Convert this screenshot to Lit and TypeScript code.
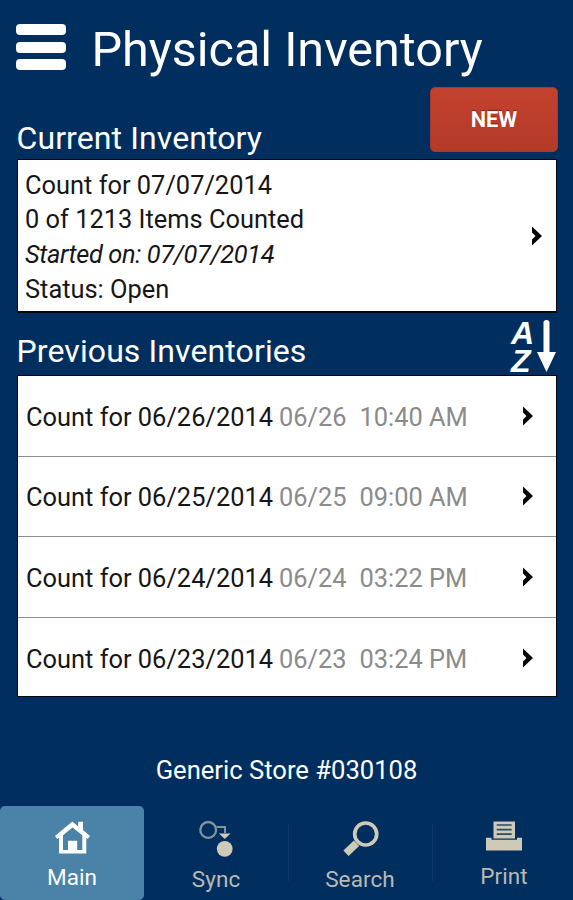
import { LitElement, html, css, svg } from "lit";
import { customElement, property } from "lit/decorators.js";
import { classMap } from "lit/directives/class-map.js";

interface Count {
  date: string;
  day: string;
  time: string;
}

const previous: Count[] = [
  { date: "06/26/2014", day: "06/26", time: "10:40 AM" },
  { date: "06/25/2014", day: "06/25", time: "09:00 AM" },
  { date: "06/24/2014", day: "06/24", time: "03:22 PM" },
  { date: "06/23/2014", day: "06/23", time: "03:24 PM" },
];

const glyphs = {
  main: svg`
    <path d="M1 17 18.300 2.500 24.200 7.500V2.800H29V11L36 17 33.800 20 32.300 18.700V34.500H5V18.700L3.300 20Z" fill="#fff"/>
    <path d="M9 16.300 18.500 8.500 28.300 16.300V31H23.200V21.800H14V31H9Z" fill="#4b82a8"/>`,
  sync: svg`
    <circle cx="10.200" cy="10.900" r="7.900" fill="none" stroke="#85939a" stroke-width="2.300"/>
    <path d="M18.500 8H27V14" fill="none" stroke="#85939a" stroke-width="2"/>
    <path d="M21 14.500H32.500L26.800 20Z" fill="#cfcab8"/>
    <circle cx="26.700" cy="29.800" r="7.900" fill="#cfcab8"/>`,
  search: svg`
    <circle cx="23.700" cy="15" r="11" fill="none" stroke="#cfcab8" stroke-width="3.700"/>
    <path d="M14.500 24.300 4 34.300" fill="none" stroke="#cfcab8" stroke-width="7.600"/>`,
  print: svg`
    <rect x="7.500" y="2.500" width="21.500" height="17" fill="#cfcab8"/>
    <path d="M10.700 6H25.700M10.700 10.600H25.700M10.700 15.200H25.700" stroke="#2c4a62" stroke-width="1.700"/>
    <path d="M0 18.700H5.500V20.700H31V18.700H36V31.500H0Z" fill="#cfcab8"/>`,
};

@customElement("tab-item")
export class TabItem extends LitElement {
  @property() icon: keyof typeof glyphs = "main";
  @property() label = "";
  @property({ type: Boolean }) active = false;

  static styles = css`
    :host { display: block; }
    .tab {
      box-sizing: border-box;
      height: 94px;
      padding-top: 13px;
      display: flex;
      flex-direction: column;
      align-items: center;
      color: #b9b9b6;
      font: 22.5px/26px Roboto, sans-serif;
    }
    .active { background: #4b82a8; color: #fff; border-radius: 5px; }
    svg { display: block; width: 37px; height: 38px; }
    .label { margin-top: 9px; letter-spacing: 0.1px; }
    .active .label { margin-top: 7px; }
    .print .label { margin-top: 6px; }
  `;

  render() {
    return html`<div class=${classMap({ tab: true, active: this.active, [this.icon]: true })}>
      <svg viewBox="0 0 37 38">${glyphs[this.icon]}</svg>
      <span class="label">${this.label}</span>
    </div>`;
  }
}

@customElement("app-root")
export class AppRoot extends LitElement {
  static styles = css`
    :host {
      display: block;
      height: 900px;
      overflow: hidden;
      background: #002f5f;
      color: #fff;
      font-family: Roboto, sans-serif;
    }
    .page { height: 900px; display: flex; flex-direction: column; }
    header { height: 87px; display: flex; align-items: flex-start; padding-left: 16px; box-sizing: border-box; }
    .burger { width: 50px; padding-top: 24px; display: grid; gap: 6.5px; }
    .bar { height: 11px; border-radius: 4px; background: #fff; }
    h1 { margin: 22px 0 0 25.500px; font-size: 48.5px; line-height: 56px; font-weight: 400; white-space: nowrap; }
    .heading { display: flex; justify-content: space-between; padding: 0 15px 0 16.5px; }
    .current { height: 72px; }
    .earlier { height: 62px; }
    h2 { margin: 0; font-size: 32px; line-height: 36px; font-weight: 400; white-space: nowrap; letter-spacing: 0.1px; }
    .current h2 { padding-top: 33px; }
    .earlier h2 { padding-top: 20px; }
    button {
      width: 128px; height: 65px; padding: 0; border: 1px solid #a93a2b; border-radius: 5px;
      background: linear-gradient(#c4412f, #b33a29);
      color: #fff; font: 700 21.7px/25px Roboto, sans-serif; text-shadow: 0 -1px 1px #8d1d10;
    }
    .sort { display: flex; width: 47px; height: 54px; margin: 6px 1px 0 0; }
    .letters { width: 27px; font: italic 700 32px/28px "Liberation Sans", sans-serif; }
    .letters div { height: 28px; padding-left: 1px; }
    .arrow { width: 20px; height: 54px; }
    .card, .list { margin: 0 16px 0 17px; border: 1px solid #00040c; background: #fff; color: #161616; font-size: 25.4px; }
    .card {
      height: 154px; box-sizing: border-box; display: flex; justify-content: space-between; align-items: center;
      padding: 0 13px 0 7px; border-bottom-width: 2px;
    }
    .lines { line-height: 34.6px; white-space: nowrap; padding-top: 3px; }
    .lines div { height: 34.6px; }
    .lines i { letter-spacing: -0.37px; }
    .list { height: 322px; box-sizing: border-box; overflow: hidden; }
    .row {
      height: 80.6px; box-sizing: border-box; display: flex; align-items: center;
      padding: 0 22px 0 8px; border-bottom: 1px solid #8d8d8d; white-space: pre;
    }
    .row > span { padding-top: 2px; }
    .when { color: #8b8b8b; margin-left: 6px; flex: 1; }
    .time { margin-left: 13px; }
    .chevron { width: 12px; height: 22px; flex: none; }
    .store { margin-top: 57px; height: 32px; line-height: 32px; text-align: center; font-size: 25.6px; }
    nav { margin-top: auto; display: grid; grid-template-columns: repeat(4, 144px); }
    nav tab-item { position: relative; }
    nav tab-item + tab-item + tab-item::before {
      content: ""; position: absolute; left: 0; top: 18px; width: 1px; height: 57px; background: #0d3c68;
    }
  `;

  private chevron() {
    return html`<svg class="chevron" viewBox="0 0 12 22"><path d="M1 1.500 11 11 1 20.500V14.500L4.500 11 1 7.500Z" fill="#080808"/></svg>`;
  }

  render() {
    return html`<div class="page">
      <header>
        <div class="burger"><div class="bar"></div><div class="bar"></div><div class="bar"></div></div>
        <h1>Physical Inventory</h1>
      </header>
      <div class="heading current"><h2>Current Inventory</h2><button>NEW</button></div>
      <section class="card">
        <div class="lines">
          <div>Count for 07/07/2014</div>
          <div>0 of 1213 Items Counted</div>
          <div><i>Started on: 07/07/2014</i></div>
          <div>Status: Open</div>
        </div>
        ${this.chevron()}
      </section>
      <div class="heading earlier">
        <h2>Previous Inventories</h2>
        <div class="sort">
          <div class="letters"><div>A</div><div>Z</div></div>
          <svg class="arrow" viewBox="0 0 20 54">
            <path d="M6.500 3.500Q6.500 1 9.500 1T12.500 3.500V33H19L9.500 53 0 33H6.500Z" fill="#fff"/>
          </svg>
        </div>
      </div>
      <section class="list">
        ${previous.map(
          (c) => html`<div class="row"><span>Count for ${c.date}</span><span class="when">${c.day}<span class="time">${c.time}</span></span>${this.chevron()}</div>`
        )}
      </section>
      <div class="store">Generic Store #030108</div>
      <nav>
        <tab-item icon="main" label="Main" active></tab-item>
        <tab-item icon="sync" label="Sync"></tab-item>
        <tab-item icon="search" label="Search"></tab-item>
        <tab-item icon="print" label="Print"></tab-item>
      </nav>
    </div>`;
  }
}
